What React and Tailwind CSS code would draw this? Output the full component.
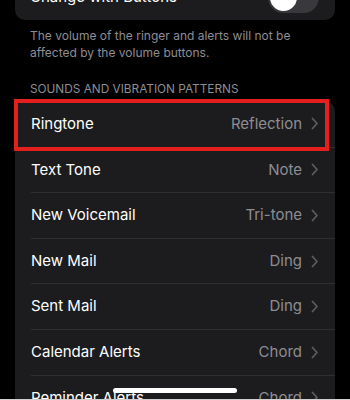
import React from 'react';

const rows = [
  { label: 'Ringtone', value: 'Reflection' },
  { label: 'Text Tone', value: 'Note' },
  { label: 'New Voicemail', value: 'Tri-tone' },
  { label: 'New Mail', value: 'Ding' },
  { label: 'Sent Mail', value: 'Ding' },
  { label: 'Calendar Alerts', value: 'Chord' },
  { label: 'Reminder Alerts', value: 'Chord' },
];

const Chevron = () => (
  <svg width="8" height="13" viewBox="0 0 8 13" className="ml-[9px] shrink-0">
    <path d="M1.5 1.5 L6 6.5 L1.5 11.5" fill="none" stroke="#5b5b60" strokeWidth="1.8" strokeLinecap="round" strokeLinejoin="round" />
  </svg>
);

const App = () => {
  return (
    <div
      className="relative w-[350px] h-[400px] overflow-hidden bg-black text-white"
      style={{ fontFamily: 'Inter, "Liberation Sans", sans-serif' }}
    >
      {/* top card, cut off by the window */}
      <div className="mx-[15px] mt-[-26px] h-[46px] rounded-[10px] bg-[#1c1c1e] flex items-center pl-[15px] pr-[16px]">
        <span className="flex-1 text-[15px]">Change with Buttons</span>
        <div className="w-[51px] h-[31px] rounded-full bg-[#39393d] p-[2px] flex">
          <div className="w-[27px] h-[27px] rounded-full bg-white" />
        </div>
      </div>

      <p className="mx-[30px] mt-[7px] text-[12px] leading-[17px] text-[#8d8d93]">
        The volume of the ringer and alerts will not be affected by the volume buttons.
      </p>

      <p className="mx-[30px] mt-[20px] text-[11.8px] leading-[16px] text-[#8d8d93]">
        SOUNDS AND VIBRATION PATTERNS
      </p>

      <div className="mx-[15px] mt-[4px] rounded-[10px] bg-[#1c1c1e]">
        {rows.map((row, i) => (
          <div key={row.label} className="flex items-center h-[45.6px] pl-[16px]">
            <div
              className={
                'flex-1 h-full flex items-center pr-[16px] ' +
                (i > 0 ? 'border-t border-[#2f2f32]' : '')
              }
            >
              <span className="flex-1 text-[15px] text-white">{row.label}</span>
              <span className="text-[15px] text-[#8d8d93]">{row.value}</span>
              <Chevron />
            </div>
          </div>
        ))}
      </div>

      {/* red highlight box */}
      <div className="absolute left-[14px] top-[99px] w-[315px] h-[52px] border-[4px] border-[#e4201f]" />

      {/* home indicator */}
      <div className="absolute left-[113px] top-[388px] w-[124px] h-[5px] rounded-full bg-white" />
      <div className="absolute left-0 bottom-0 w-full h-[1px] bg-[#cfcfcf]" />
    </div>
  );
};

export default App;
